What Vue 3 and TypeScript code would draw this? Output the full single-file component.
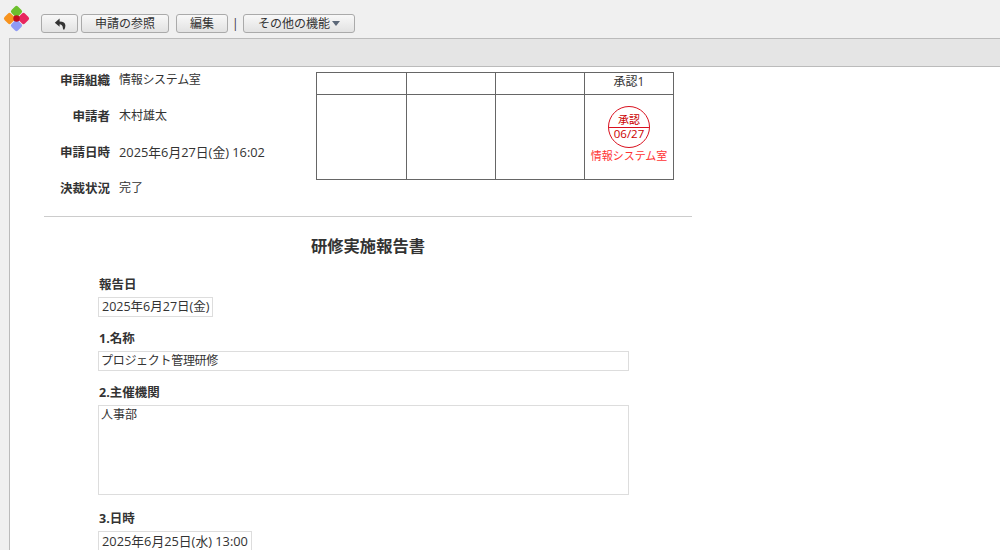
<script setup lang="ts">
const info = [
  { label: '申請組織', value: '情報システム室', cls: 'kana' },
  { label: '申請者', value: '木村雄太', cls: '' },
  { label: '申請日時', value: '2025年6月27日(金) 16:02', cls: 'date-long' },
  { label: '決裁状況', value: '完了', cls: '' },
]
</script>

<template>
  <div class="page">
    <header class="toolbar">
      <svg class="logo" width="28" height="28" viewBox="0 0 28 28">
        <rect x="10" y="3" width="9" height="9" rx="2" transform="rotate(45 14.500 7.500)" fill="#6cc02c" />
        <rect x="3" y="10" width="9" height="9" rx="2" transform="rotate(45 7.500 14.500)" fill="#f7931e" />
        <rect x="17" y="10" width="9" height="9" rx="2" transform="rotate(45 21.500 14.500)" fill="#e8265e" />
        <rect x="10" y="17" width="9" height="9" rx="2" transform="rotate(45 14.500 21.500)" fill="#8f9bf5" />
        <circle cx="14.500" cy="14.500" r="3.200" fill="#c00d1e" />
      </svg>
      <button class="btn back" aria-label="戻る">
        <svg width="12" height="12" viewBox="0 0 12 12">
          <path d="M5.600.6.800 4.700l4.800 4V6.200c1.600 0 2.600.9 3 2.400l.5 2.800h1.300c.7-1.400 1-2.700 1-4 0-2.400-2.100-3.600-5.800-3.800z" fill="#333" />
        </svg>
      </button>
      <button class="btn ref">申請の参照</button>
      <button class="btn edit">編集</button>
      <span class="sep">|</span>
      <button class="btn more">その他の機能<i class="caret"></i></button>
    </header>

    <div class="frame">
      <div class="band"></div>
      <main class="content">
        <section class="summary">
          <dl class="info">
            <div v-for="row in info" :key="row.label" class="info-row">
              <dt>{{ row.label }}</dt>
              <dd :class="row.cls">{{ row.value }}</dd>
            </div>
          </dl>
          <table class="approval">
            <colgroup>
              <col class="c90" /><col class="c89" /><col class="c89" /><col class="c89" />
            </colgroup>
            <tbody>
              <tr class="head"><td></td><td></td><td></td><td>承認1</td></tr>
              <tr class="body">
                <td></td><td></td><td></td>
                <td class="stamp-cell">
                  <div class="stamp">
                    <span class="stamp-top">承認</span>
                    <span class="stamp-date">06/27</span>
                  </div>
                  <div class="stamp-org">情報システム室</div>
                </td>
              </tr>
            </tbody>
          </table>
        </section>

        <hr class="rule" />
        <h1 class="title">研修実施報告書</h1>

        <section class="form">
          <div class="field">
            <h2>報告日</h2>
            <div class="box inline date-short">2025年6月27日(金)</div>
          </div>
          <div class="field">
            <h2>1.名称</h2>
            <div class="box wide kana">プロジェクト管理研修</div>
          </div>
          <div class="field gap">
            <h2>2.主催機関</h2>
            <div class="box wide tall">人事部</div>
          </div>
          <div class="field">
            <h2>3.日時</h2>
            <div class="box inline date-long">2025年6月25日(水) 13:00</div>
          </div>
        </section>
      </main>
    </div>
  </div>
</template>

<style>
html, body { margin: 0; height: 100%; overflow: hidden; background: #f0f0f0; }
</style>

<style scoped>
.page {
  width: 1000px;
  height: 550px;
  overflow: hidden;
  background: #f0f0f0;
  color: #333;
  font: 12px/18px "Open Sans", "Noto Sans CJK JP", sans-serif;
}
.toolbar {
  height: 38px;
  display: flex;
  align-items: flex-start;
  position: relative;
  padding: 14px 0 0 41px;
  box-sizing: border-box;
}
.logo { position: absolute; left: 2px; top: 4px; }
.btn {
  height: 19px;
  padding: 0;
  border: 1px solid #aaa;
  border-radius: 3px;
  background: linear-gradient(#f8f8f8, #e2e2e2);
  color: #333;
  font: inherit;
  line-height: 16px;
  display: flex;
  align-items: center;
  justify-content: center;
}
.back { width: 37px; margin-right: 3px; }
.ref { width: 88px; margin-right: 7px; }
.edit { width: 52px; }
.sep { width: 15px; box-sizing: border-box; padding-left: 4px; line-height: 19px; }
.more { width: 112px; }
.caret {
  margin-left: 2px;
  border: 4px solid transparent;
  border-top: 5px solid #5c6878;
  border-bottom: 0;
}
.frame {
  margin-left: 9px;
  height: 512px;
  border-left: 1px solid #bbb;
  background: #fff;
  overflow: hidden;
}
.band {
  height: 29px;
  box-sizing: border-box;
  background: #e5e5e5;
  border-top: 1px solid #bbb;
  border-bottom: 1px solid #bbb;
}
.content { width: 682px; padding-left: 34px; }
.summary { display: flex; height: 149px; }
.info { margin: 4px 0 0; width: 272px; }
.info-row { display: flex; height: 36px; }
.info-row dt { width: 66px; text-align: right; font-weight: 700; font-size: 12.5px; margin-top: 1px; }
.info-row dd { margin: 0 0 0 9px; }
.kana { letter-spacing: -0.3px; }
.date-long { font-size: 12.8px; }
.date-short { font-size: 12.5px; }
.approval {
  margin-top: 5px;
  width: 358px;
  height: 108px;
  border-collapse: collapse;
  table-layout: fixed;
  align-self: flex-start;
}
.c90 { width: 90px; }
.c89 { width: 89px; }
.approval td { border: 1px solid #666; padding: 0; text-align: center; }
.head td { height: 22px; line-height: 16px; padding-bottom: 4px; box-sizing: border-box; }
.stamp-cell { vertical-align: top; }
.stamp {
  width: 40px;
  height: 40px;
  margin: 11px auto 0;
  border: 1px solid #d9101e;
  border-radius: 50%;
  color: #c00;
  display: flex;
  flex-direction: column;
  overflow: hidden;
}
.stamp-top {
  height: 21px;
  box-sizing: border-box;
  padding-top: 6px;
  font-size: 11px;
  line-height: 13px;
  border-bottom: 1px solid #d9101e;
}
.stamp-date { line-height: 11px; font-size: 11.5px; }
.stamp-org { color: #f33; font-size: 11px; line-height: 16px; }
.rule { margin: 0; width: 648px; height: 1px; border: 0; background: #ccc; }
.title { margin: 19px 0 0; width: 648px; text-align: center; font-size: 16.3px; line-height: 20px; }
.form { padding: 19px 0 0 54px; }
.field { margin-bottom: 12px; }
.gap { margin-bottom: 14px; }
.field h2 { margin: 0 0 3px; padding: 1px 0 0 1px; font-size: 12.5px; line-height: 18px; }
.box {
  border: 1px solid #ddd;
  box-sizing: border-box;
  padding: 0 3px;
  height: 20px;
  line-height: 18px;
}
.inline { display: inline-block; vertical-align: top; }
.wide { width: 531px; padding-left: 2px; }
.tall { height: 90px; }
</style>
